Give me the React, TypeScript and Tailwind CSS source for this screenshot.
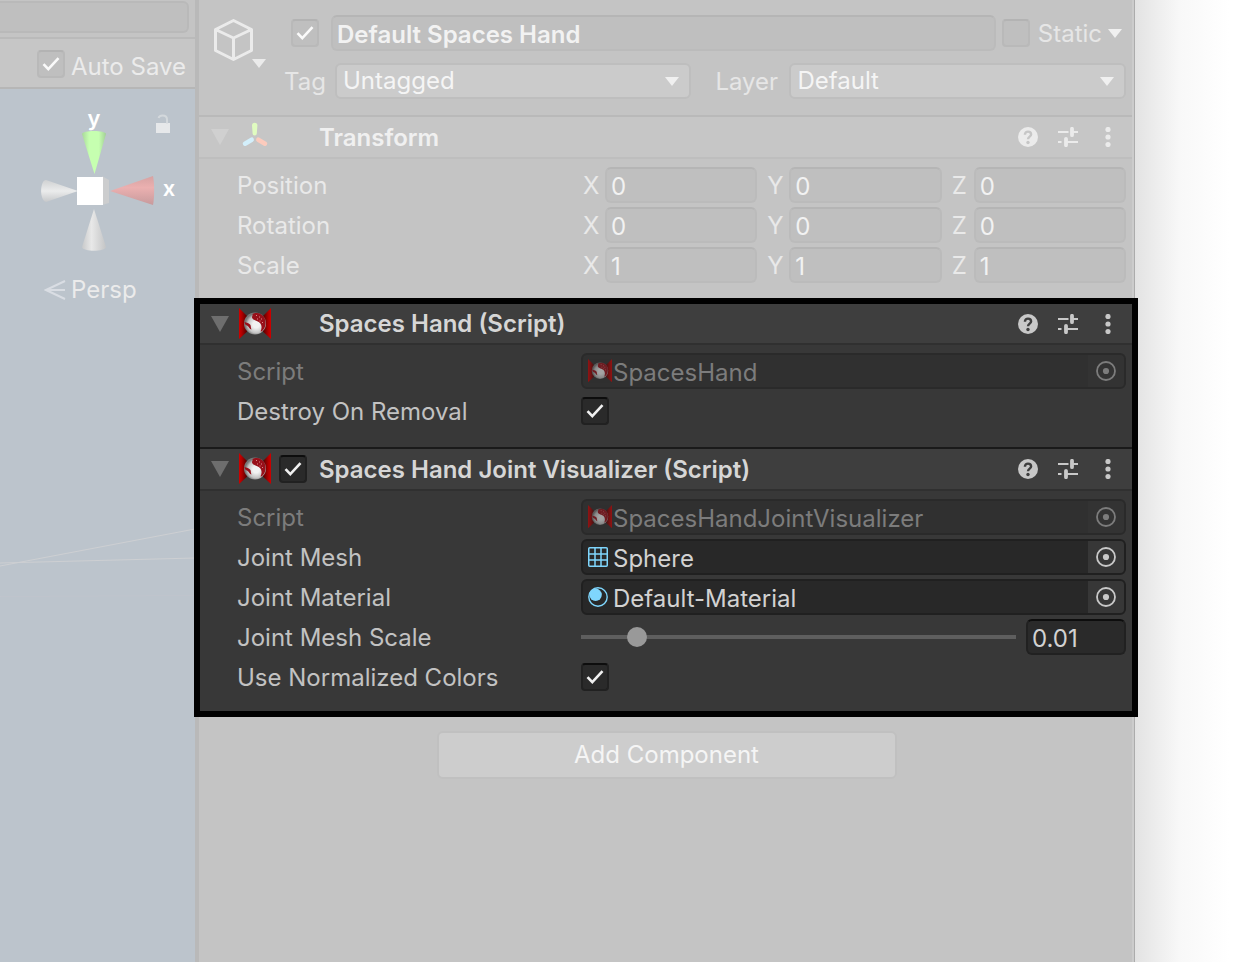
import { useId, useState, type ReactNode } from "react";

const Check = ({ className }: { className: string }) => (
  <svg viewBox="0 0 28 28" className={`pointer-events-none size-7 [grid-area:1/1] ${className}`} fill="none" stroke="currentColor" strokeWidth="2.6">
    <path d="M6.5 14.2 11.3 19.2 21.5 8.2" />
  </svg>
);

function CheckBox({ id, label, light, on = true }: { id?: string; label?: string; light?: boolean; on?: boolean }) {
  const [checked, setChecked] = useState(on);
  const tone = light
    ? "border-[#b9b9b9] border-t-[#b3b3b3] bg-[#bfbfbf]"
    : "border-[#212121] border-t-[#0d0d0d] bg-[#2a2a2a]";
  return (
    <span className="grid shrink-0">
      <input
        id={id}
        type="checkbox"
        aria-label={label}
        checked={checked}
        onChange={(e) => setChecked(e.target.checked)}
        className={`size-7 appearance-none rounded-[4px] border-2 [grid-area:1/1] ${tone}`}
      />
      {checked && <Check className={light ? "text-[#fafafa]" : "text-[#f0f0f0]"} />}
    </span>
  );
}

function TextField({ value, label, id, light, className = "" }: { value: string; label?: string; id?: string; light?: boolean; className?: string }) {
  const tone = light
    ? "border-[#bbbbbb] border-t-[#b5b5b5] bg-[#bfbfbf] text-[#f2f2f2]"
    : "border-[#212121] border-t-[#0d0d0d] bg-[#2a2a2a] text-[#d2d2d2]";
  return (
    <input
      id={id}
      type="text"
      aria-label={label}
      defaultValue={value}
      className={`h-9 min-w-0 rounded-md border-2 px-1 pt-0.5 ${tone} ${className}`}
    />
  );
}

const Down = ({ className = "" }: { className?: string }) => (
  <svg viewBox="0 0 14 9" className={`h-[9px] w-3.5 shrink-0 ${className}`} fill="currentColor">
    <path d="M0 0h14L7 9z" />
  </svg>
);

function DropDown({ id, value, className }: { id: string; value: string; className: string }) {
  return (
    <span className={`grid min-w-0 items-center ${className}`}>
      <select
        id={id}
        className="h-9 w-full appearance-none rounded-md border-2 border-[#bebebe] bg-[#cbcbcb] px-1.5 text-[#f5f5f5] [grid-area:1/1]"
      >
        <option>{value}</option>
      </select>
      <Down className="pointer-events-none mr-3 justify-self-end text-[#f0f0f0] [grid-area:1/1]" />
    </span>
  );
}

const HelpIcon = () => (
  <svg viewBox="0 0 20 20" className="size-5">
    <circle cx="10" cy="10" r="10" fill="currentColor" />
    <path d="M6.9 7.7C6.9 5.6 8.3 4.6 10 4.6s3.1 1.200 3.100 2.800c0 2.200-3.100 2.300-3.100 4.900" fill="none" className="stroke-(--bar)" strokeWidth="2.4" />
    <circle cx="10" cy="15.500" r="1.700" className="fill-(--bar)" />
  </svg>
);

const PresetIcon = () => (
  <svg viewBox="0 0 20 20" className="size-5" fill="none" stroke="currentColor" strokeWidth="2">
    <path d="M0 5h10.500M13.500 5H20M0 15h3.500M7 15h13" />
    <path d="M14 1.800v6.400M8 11.800v6.400" strokeWidth="3.800" strokeLinecap="round" />
  </svg>
);

const MenuIcon = () => (
  <svg viewBox="0 0 20 20" className="size-5" fill="currentColor">
    <circle cx="10" cy="2.500" r="2.600" />
    <circle cx="10" cy="10" r="2.600" />
    <circle cx="10" cy="17.500" r="2.600" />
  </svg>
);

const ScriptIcon = ({ className }: { className: string }) => {
  const id = useId();
  return (
    <svg viewBox="0 0 32 32" className={`shrink-0 ${className}`}>
      <defs>
        <linearGradient id={`${id}l`}>
          <stop offset="0" stopColor="#d00000" />
          <stop offset="0.250" stopColor="#b00000" />
          <stop offset="0.900" stopColor="#300000" />
        </linearGradient>
        <linearGradient id={`${id}r`}>
          <stop offset="0.100" stopColor="#300000" />
          <stop offset="0.750" stopColor="#b00000" />
          <stop offset="1" stopColor="#d00000" />
        </linearGradient>
        <radialGradient id={`${id}s`} cx="0.550" cy="0.550">
          <stop offset="0.300" stopColor="#f2f2f2" />
          <stop offset="0.750" stopColor="#c4c4c4" />
          <stop offset="1" stopColor="#777777" />
        </radialGradient>
      </defs>
      <path d="M0 0 11 11v10L0 31z" fill={`url(#${id}l)`} />
      <path d="M32 0 21 11v10l11 10z" fill={`url(#${id}r)`} />
      <circle cx="16" cy="15.500" r="11" fill={`url(#${id}s)`} />
      <path d="M13.500 6c5-2.500 10 0 12 4 2 4.500 1 9.500-1.500 12-1 1-1.500 1.500-2.500 1.500 1.500-3 1.500-6-.5-8.500-2-2.500-7.500-2.500-8-5.500 0-1.500 1-2 .5-3.500z" fill="#98101a" />
      <path d="M5.500 14c2 1 4.500 1 5.800 2.800.9 1.400.2 2.700 1.200 4.700-2-.5-2.500-2.500-3.500-3.300-1.500-1-3.200-1.200-3.500-4.200z" fill="#98101a" />
      <path d="M17 7.500h1M20 9h1M22 11h1M18 11h1M20.500 13h1M23 14.500h1" stroke="#d88" strokeWidth="1" />
    </svg>
  );
};

const TransformIcon = () => (
  <svg viewBox="0 0 32 32" className="size-8 shrink-0">
    <path d="M13 5.500a2.700 2.700 0 0 1 5.400 0l-.6 8a2 2 0 0 1-4.200 0z" transform="translate(0 -1)" fill="#e0fbc0" />
    <path d="M12.700 18.700 6 22.700" stroke="#d3effb" strokeWidth="4.500" strokeLinecap="round" />
    <path d="M19.300 18.700 26 22.700" stroke="#fccbbd" strokeWidth="4.500" strokeLinecap="round" />
  </svg>
);

function ComponentHeader({ title, icon, light, toggle, className }: { title: string; icon: ReactNode; light?: boolean; toggle?: boolean; className: string }) {
  return (
    <header
      className={`flex items-center border-b-2 pr-3.5 ${className} ${
        light ? "border-[#bebebe] bg-[#c6c6c6] text-[#ebebeb] [--bar:#c6c6c6]" : "border-[#303030] bg-[#3e3e3e] text-[#c8c8c8] [--bar:#3e3e3e]"
      }`}
    >
      <button type="button" aria-label={`Fold ${title}`} className={light ? "text-[#d0d0d0]" : "text-[#6e6e6e]"}>
        <svg viewBox="0 0 18 16" className="h-4 w-[18px]" fill="currentColor">
          <path d="M0 0h18L9 16z" />
        </svg>
      </button>
      <span className="ml-2.5 flex">{icon}</span>
      <span className="ml-2 flex w-10">{toggle && <CheckBox label={`Enable ${title}`} />}</span>
      <h2 className={`flex-1 pt-px font-semibold ${light ? "text-[#f0f0f0]" : "text-[#d6d6d6]"}`}>{title}</h2>
      <div className="flex gap-5">
        <button type="button" aria-label="Help"><HelpIcon /></button>
        <button type="button" aria-label="Presets"><PresetIcon /></button>
        <button type="button" aria-label="More"><MenuIcon /></button>
      </div>
    </header>
  );
}

function Row({ label, id, tone = "text-[#c2c2c2]", children }: { label: string; id?: string; tone?: string; children: ReactNode }) {
  return (
    <div className="flex h-10 items-center">
      <label htmlFor={id} className={`w-[344px] shrink-0 pt-0.5 ${tone}`}>{label}</label>
      <div className="flex min-w-0 flex-1 items-center">{children}</div>
    </div>
  );
}

function VectorRow({ label, values }: { label: string; values: string[] }) {
  return (
    <Row label={label} tone="text-[#e9e9e9]">
      <div className="grid flex-1 grid-cols-3 gap-2">
        {["X", "Y", "Z"].map((axis, i) => (
          <label key={axis} className="flex items-center text-[#e9e9e9]">
            <span className="w-6 shrink-0 pt-0.5 pl-0.5">{axis}</span>
            <TextField light value={values[i]} label={`${label} ${axis}`} className="w-full" />
          </label>
        ))}
      </div>
    </Row>
  );
}

function ObjectField({ id, icon, value, disabled }: { id: string; icon: ReactNode; value: string; disabled?: boolean }) {
  return (
    <div
      className={`flex h-9 min-w-0 flex-1 items-stretch overflow-hidden rounded-md border-2 ${
        disabled ? "border-[#2a2a2a] bg-[#303030] text-[#7c7c7c]" : "border-[#202020] bg-[#282828] text-[#d2d2d2]"
      }`}
    >
      <span className="flex w-[30px] items-center justify-center">{icon}</span>
      <input id={id} readOnly disabled={disabled} value={value} className="min-w-0 flex-1 pt-1" />
      <button
        type="button"
        disabled={disabled}
        aria-label={`Select ${value}`}
        className={`flex w-9 items-center justify-center ${disabled ? "bg-[#333333]" : "bg-[#373737] text-[#c8c8c8]"}`}
      >
        <svg viewBox="0 0 20 20" className="size-5">
          <circle cx="10" cy="10" r="9" fill="none" stroke="currentColor" strokeWidth="1.800" />
          <circle cx="10" cy="10" r="3.100" fill="currentColor" />
        </svg>
      </button>
    </div>
  );
}

const MeshIcon = () => (
  <svg viewBox="0 0 20 20" className="size-5" fill="none" stroke="#7fd6fd" strokeWidth="1.500">
    <rect x="0.750" y="0.750" width="18.500" height="18.500" rx="1" />
    <path d="M7 1v18M13 1v18M1 7h18M1 13h18" />
  </svg>
);

const MaterialIcon = () => (
  <svg viewBox="0 0 20 20" className="size-5">
    <circle cx="10" cy="10" r="9.200" fill="none" stroke="#7fd6fd" strokeWidth="1.400" />
    <circle cx="7.600" cy="7.800" r="6.200" fill="#7fd6fd" />
  </svg>
);

function ScenePanel() {
  return (
    <aside className="flex w-[195px] shrink-0 flex-col bg-[#bcc4cc] text-[#ebebeb]">
      <div className="border-b-2 border-[#bababa] bg-[#c4c4c4] pt-px pr-1.5 pb-1">
        <input aria-label="Search" className="h-8 w-full rounded-r-md border-2 border-l-0 border-[#b9b9b9] bg-[#bfbfbf] px-2" />
      </div>
      <div className="flex h-[50px] items-center border-b-2 border-[#b6b6b6] bg-[#c6c6c6] pt-0.5 pl-[37px]">
        <CheckBox id="auto-save" light />
        <label htmlFor="auto-save" className="pt-1.5 pl-1.5 whitespace-nowrap">Auto Save</label>
      </div>
      <svg viewBox="0 0 195 186" className="h-[186px] w-full">
        <defs>
          <linearGradient id="up"><stop offset="0" stopColor="#a9d79b" /><stop offset="0.300" stopColor="#c6ffb0" /><stop offset="0.700" stopColor="#c6ffb0" /><stop offset="1" stopColor="#a3cf97" /></linearGradient>
          <linearGradient id="down"><stop offset="0" stopColor="#c8c9ca" /><stop offset="0.400" stopColor="#e8e8e8" /><stop offset="1" stopColor="#c4c5c6" /></linearGradient>
          <linearGradient id="left" x2="0" y2="1"><stop offset="0" stopColor="#cfd1d2" /><stop offset="0.500" stopColor="#ebecec" /><stop offset="1" stopColor="#c6c8ca" /></linearGradient>
          <linearGradient id="right" x2="0" y2="1"><stop offset="0" stopColor="#d6a2a2" /><stop offset="0.400" stopColor="#ebb0b0" /><stop offset="1" stopColor="#c79a9c" /></linearGradient>
        </defs>
        <path d="M82 45c0-4 24-4 24 0L94.500 85z" fill="url(#up)" />
        <path d="M94 120 106 158c-1 5-23 5-24 0z" fill="url(#down)" />
        <path d="M78 102 46 91c-6 0-7 20 0 22z" fill="url(#left)" />
        <path d="M110 102 153 87c1.500 6 1.500 23 0 29z" fill="url(#right)" />
        <path d="M102 87l7 4v23l-7 2z" fill="#cccdce" />
        <path d="M77 88h26v28H77z" fill="#fff" />
        <text x="94" y="37" textAnchor="middle" className="fill-white text-[22px] font-semibold">y</text>
        <text x="169" y="107" textAnchor="middle" className="fill-white text-[22px] font-semibold">x</text>
        <path d="M156 34h14v10h-14z" fill="#e6e8ea" />
        <path d="M158.500 29q1-2.500 4-2.500 4.500 0 4.500 4v4" fill="none" stroke="#d3d8dc" strokeWidth="2" />
      </svg>
      <button type="button" className="flex items-center pl-[44px]">
        <svg viewBox="0 0 22 20" className="h-5 w-[22px]" fill="none" stroke="#d9dde3" strokeWidth="2">
          <path d="M21 1 2 10l19 9M2 10h19" />
        </svg>
        <span className="pl-[5px]">Persp</span>
      </button>
      <svg viewBox="0 0 195 80" className="mt-[217px] h-20 w-full" fill="none" stroke="#cdcfd2">
        <path d="M0 44 195 7M0 41 195 36" />
        <path d="M0 74.500 195 73.500" stroke="#c0c5cd" />
      </svg>
    </aside>
  );
}

export default function App() {
  const [scale, setScale] = useState("0.01");
  return (
    <main className="flex min-h-screen bg-white font-['Inter',sans-serif] text-[24px] leading-[30px]">
      <ScenePanel />

      <section className="flex min-w-0 flex-1 flex-col border-l-4 border-[#b9b9b9] bg-[#c4c4c4]">
        <div className="flex flex-1 flex-col border-r border-[#acacac]">
          <div className="flex flex-1 flex-col border-r-2 border-[#cccccc]">
            <div className="flex h-[117px] border-b-2 border-[#b9b9b9] pt-[15px] pr-1.5 pl-[15px] text-[#e6e6e6]">
              <div className="flex w-[70px] shrink-0 pt-1">
                <svg viewBox="0 0 40 42" className="h-[42px] w-10" fill="none" stroke="#ebebeb" strokeWidth="3" strokeLinejoin="round">
                  <path d="M19.500 1.500 37.500 10.500v21l-18 9-18-9v-21zM1.500 10.500l18 8.500 18-8.500M19.500 19v21.500" />
                </svg>
                <Down className="mt-10 -ml-0.5 text-[#ebebeb]" />
              </div>
              <div className="flex min-w-0 flex-1 flex-col gap-3">
                <div className="flex items-center pl-[7px]">
                  <CheckBox light label="Active" />
                  <TextField light value="Default Spaces Hand" label="Name" className="ml-3 flex-1 font-semibold" />
                  <span className="ml-1.5 flex">
                    <CheckBox light id="static" on={false} />
                  </span>
                  <label htmlFor="static" className="pt-0.5 pl-2">Static</label>
                  <Down className="mr-1 ml-1.5 text-[#f0f0f0]" />
                </div>
                <div className="flex items-center">
                  <label htmlFor="tag" className="w-[51px] shrink-0 pt-0.5">Tag</label>
                  <DropDown id="tag" value="Untagged" className="flex-[18]" />
                  <label htmlFor="layer" className="ml-6 w-[74px] shrink-0 pt-0.5">Layer</label>
                  <DropDown id="layer" value="Default" className="flex-[17]" />
                </div>
              </div>
            </div>

            <ComponentHeader light title="Transform" icon={<TransformIcon />} className="h-[42px] pl-3" />
            <div className="pt-1.5 pr-1.5 pb-[13px] pl-[38px]">
              <VectorRow label="Position" values={["0", "0", "0"]} />
              <VectorRow label="Rotation" values={["0", "0", "0"]} />
              <VectorRow label="Scale" values={["1", "1", "1"]} />
            </div>

            <div className="relative -mr-1.5 -ml-[5px] border-6 border-black bg-[#383838]">
              <ComponentHeader title="Spaces Hand (Script)" icon={<ScriptIcon className="size-8" />} className="h-[41px] pl-[11px]" />
              <div className="border-b-2 border-[#1a1a1a] pt-1.5 pr-1.5 pb-4 pl-[37px]">
                <Row label="Script" id="script-a" tone="text-[#7c7c7c]">
                  <ObjectField disabled id="script-a" value="SpacesHand" icon={<ScriptIcon className="ml-1 size-6 opacity-60" />} />
                </Row>
                <Row label="Destroy On Removal" id="destroy">
                  <CheckBox id="destroy" />
                </Row>
              </div>
              <ComponentHeader toggle title="Spaces Hand Joint Visualizer (Script)" icon={<ScriptIcon className="size-8" />} className="h-[42px] pl-[11px]" />
              <div className="pt-1.5 pr-1.5 pb-3.5 pl-[37px]">
                <Row label="Script" id="script-b" tone="text-[#7c7c7c]">
                  <ObjectField disabled id="script-b" value="SpacesHandJointVisualizer" icon={<ScriptIcon className="ml-1 size-6 opacity-60" />} />
                </Row>
                <Row label="Joint Mesh" id="mesh">
                  <ObjectField id="mesh" value="Sphere" icon={<MeshIcon />} />
                </Row>
                <Row label="Joint Material" id="material">
                  <ObjectField id="material" value="Default-Material" icon={<MaterialIcon />} />
                </Row>
                <Row label="Joint Mesh Scale" id="scale">
                  <input
                    id="scale"
                    type="range"
                    min="0.005"
                    max="0.05"
                    step="0.001"
                    value={scale}
                    onChange={(e) => setScale(e.target.value)}
                    className="h-5 min-w-0 flex-1 appearance-none bg-transparent [&::-webkit-slider-runnable-track]:h-1 [&::-webkit-slider-runnable-track]:bg-[#5e5e5e] [&::-webkit-slider-thumb]:-mt-2 [&::-webkit-slider-thumb]:size-5 [&::-webkit-slider-thumb]:appearance-none [&::-webkit-slider-thumb]:rounded-full [&::-webkit-slider-thumb]:bg-[#999999]"
                  />
                  <TextField key={scale} value={scale} label="Joint Mesh Scale value" className="ml-2.5 w-[100px]" />
                </Row>
                <Row label="Use Normalized Colors" id="colors">
                  <CheckBox id="colors" />
                </Row>
              </div>
            </div>

            <div className="flex justify-center pt-3.5 pl-0.5">
              <button type="button" className="h-12 w-[460px] rounded-md border-2 border-[#c0c0c0] bg-[#cdcdcd] text-[#f5f5f5]">
                Add Component
              </button>
            </div>
          </div>
        </div>
      </section>

      <div className="w-[111px] shrink-0 bg-linear-to-r from-[#e3e3e3] via-[#f8f8f8] via-40% to-white to-85%" />
    </main>
  );
}
